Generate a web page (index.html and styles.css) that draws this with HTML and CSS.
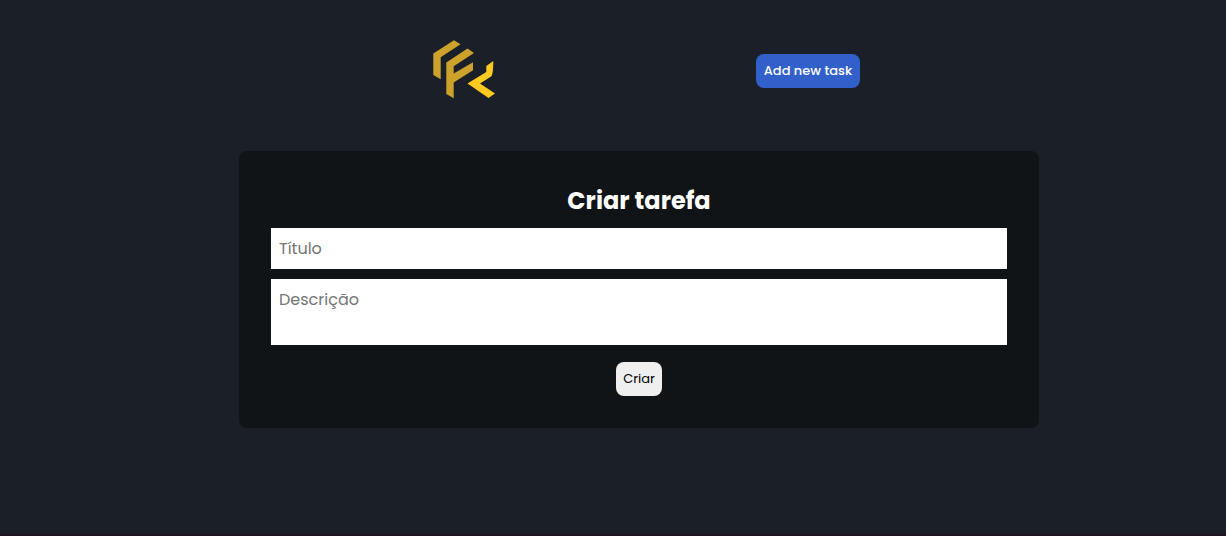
FILE: index.html
```html
<!DOCTYPE html>
<html lang="pt-BR">
<head>
<meta charset="utf-8">
<meta name="viewport" content="width=device-width, initial-scale=1">
<title>Criar tarefa</title>
<link rel="stylesheet" href="styles.css">
</head>
<body>
<div class="page">
  <header class="header">
    <svg class="logo" viewBox="418 32 92 78" role="img" aria-label="Logo">
      <g fill="#cca22c">
        <path d="M433.300 53.500L454 40.300L460.500 44.300L440.700 57.300V79.300L433.300 75Z"/>
        <path d="M446.300 62.500L467.500 48.500L474 53L453.700 66.300V73.500L473 62.300V70.300L453.700 82.500V98.300L446.300 94Z"/>
      </g>
      <path fill="#ffca1f" d="M493.300 61L486.300 66V72L467.500 83.500L488.500 98L495 93.500L480 83.500L491.500 76.300Q493.300 73 493.300 61Z"/>
    </svg>
    <button class="button button-primary" type="button">Add new task</button>
  </header>
  <main>
    <form class="card">
      <h1 class="title">Criar tarefa</h1>
      <input class="field" type="text" placeholder="Título" aria-label="Título">
      <textarea class="field field-area" placeholder="Descrição" aria-label="Descrição"></textarea>
      <button class="button" type="button">Criar</button>
    </form>
  </main>
</div>
</body>
</html>
```
FILE: styles.css
```css
* {
  box-sizing: border-box;
  margin: 0;
}

body {
  font-family: Poppins, "Open Sans", sans-serif;
  background: #1b1f27;
}

.page {
  min-height: 100vh;
  padding: 32px 0 32px 52px;
  border-bottom: 2px solid #1d1520;
}

.header {
  display: flex;
  align-items: center;
  justify-content: center;
  gap: 246px;
  margin-bottom: 41px;
}

.logo {
  width: 92px;
  height: 78px;
}

.button {
  height: 34px;
  padding: 0 7px;
  border: 0;
  border-radius: 8px;
  background: #efefef;
  color: #000;
  font-family: inherit;
  font-size: 13px;
  cursor: pointer;
}

.button-primary {
  padding: 0 8px;
  background: #3260cb;
  color: #fff;
  font-weight: 500;
}

.card {
  display: flex;
  flex-direction: column;
  align-items: center;
  max-width: 800px;
  margin: 0 auto;
  padding: 32px;
  border-radius: 8px;
  background: #101416;
}

.title {
  margin-bottom: 9px;
  color: #fff;
  font-size: 24px;
  font-weight: 700;
  line-height: 36px;
}

.field {
  width: 100%;
  height: 41px;
  margin-bottom: 10px;
  padding: 8px;
  border: 0;
  border-radius: 0;
  background: #fff;
  font-family: inherit;
  font-size: 16px;
  line-height: 26px;
}

.field::placeholder {
  color: #757575;
}

.field-area {
  height: 66px;
  margin-bottom: 17px;
  resize: none;
}
```
